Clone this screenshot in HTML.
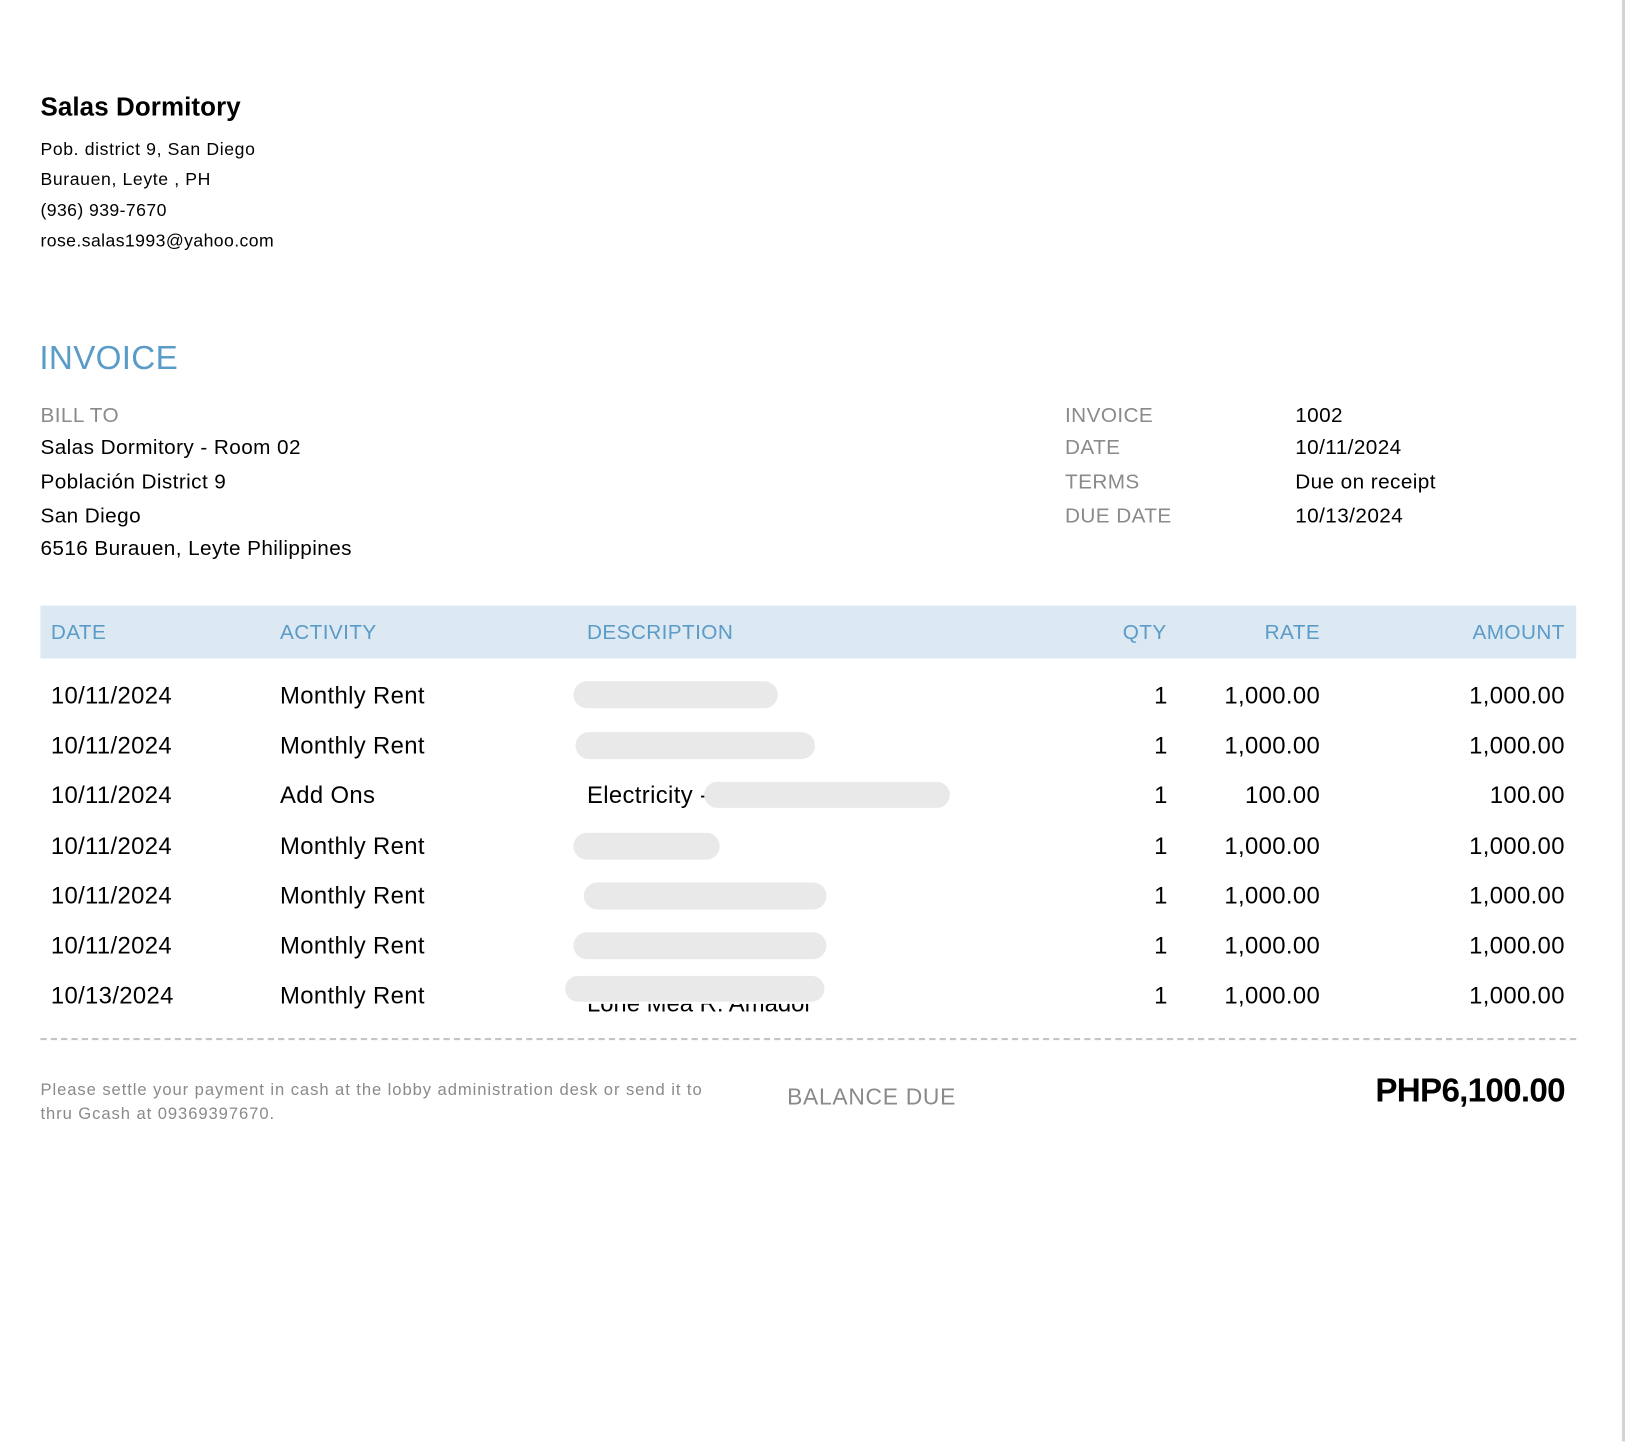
<!DOCTYPE html>
<html><head><meta charset="utf-8"><style>
html,body{margin:0;padding:0;background:#fff;width:1626px;height:1442px;overflow:hidden}
#w{position:absolute;left:0;top:0;width:1568px;height:1390px;transform:scale(1.037);transform-origin:0 0;font-family:"Liberation Sans",Arial,sans-serif;color:#000}
.t{position:absolute;white-space:nowrap;line-height:1;transform:translateY(-50%)}
.r{text-align:right}
.g{color:#8a8a8a}
.b{color:#5a9bc8}
.blob{position:absolute;background:#e9e9e9;border-radius:14px}
.m{font-size:20px;letter-spacing:0.4px}
.rw{letter-spacing:0.35px}
</style></head><body><div id="w">
<div style="position:absolute;right:1px;top:0;width:3px;height:1390px;background:#d4d4d4"></div>
<div class="t" style="left:39px;top:104px;font-size:25px;font-weight:bold;letter-spacing:0.1px">Salas Dormitory</div>
<div class="t" style="left:39px;top:144px;font-size:17px;letter-spacing:0.6px">Pob. district 9, San Diego</div>
<div class="t" style="left:39px;top:173px;font-size:17px;letter-spacing:0.6px">Burauen, Leyte , PH</div>
<div class="t" style="left:39px;top:203px;font-size:17px;letter-spacing:0.4px">(936) 939-7670</div>
<div class="t" style="left:39px;top:232px;font-size:17px;letter-spacing:0.4px">rose.salas1993@yahoo.com</div>
<div class="t b" style="left:38px;top:345px;font-size:32px;letter-spacing:0.3px">INVOICE</div>
<div class="t g m" style="left:39px;top:401px">BILL TO</div>
<div class="t m" style="left:39px;top:432px">Salas Dormitory - Room 02</div>
<div class="t m" style="left:39px;top:465px">Población District 9</div>
<div class="t m" style="left:39px;top:498px">San Diego</div>
<div class="t m" style="left:39px;top:529px">6516 Burauen, Leyte Philippines</div>
<div class="t g m" style="left:1027px;top:401px">INVOICE</div>
<div class="t g m" style="left:1027px;top:432px">DATE</div>
<div class="t g m" style="left:1027px;top:465px">TERMS</div>
<div class="t g m" style="left:1027px;top:498px">DUE DATE</div>
<div class="t m" style="left:1249px;top:401px">1002</div>
<div class="t m" style="left:1249px;top:432px">10/11/2024</div>
<div class="t m" style="left:1249px;top:465px">Due on receipt</div>
<div class="t m" style="left:1249px;top:498px">10/13/2024</div>
<div style="position:absolute;left:39px;top:584px;width:1481px;height:51px;background:#dce8f2"></div>
<div class="t b m" style="left:49px;top:610px">DATE</div>
<div class="t b m" style="left:270px;top:610px">ACTIVITY</div>
<div class="t b m" style="left:566px;top:610px">DESCRIPTION</div>
<div class="t b r m" style="right:443px;top:610px">QTY</div>
<div class="t b r m" style="right:295px;top:610px">RATE</div>
<div class="t b r m" style="right:59px;top:610px">AMOUNT</div>

<div class="rw" style="position:absolute;left:0;top:0;font-size:23px">
<div class="t" style="left:49px;top:671px">10/11/2024</div><div class="t" style="left:270px;top:671px">Monthly Rent</div><div class="t" style="left:1113px;top:671px">1</div>
<div class="t" style="left:49px;top:719px">10/11/2024</div><div class="t" style="left:270px;top:719px">Monthly Rent</div><div class="t" style="left:1113px;top:719px">1</div>
<div class="t" style="left:49px;top:767px">10/11/2024</div><div class="t" style="left:270px;top:767px">Add Ons</div><div class="t" style="left:1113px;top:767px">1</div><div class="t" style="left:566px;top:767px">Electricity -</div>
<div class="t" style="left:49px;top:816px">10/11/2024</div><div class="t" style="left:270px;top:816px">Monthly Rent</div><div class="t" style="left:1113px;top:816px">1</div>
<div class="t" style="left:49px;top:864px">10/11/2024</div><div class="t" style="left:270px;top:864px">Monthly Rent</div><div class="t" style="left:1113px;top:864px">1</div>
<div class="t" style="left:49px;top:912px">10/11/2024</div><div class="t" style="left:270px;top:912px">Monthly Rent</div><div class="t" style="left:1113px;top:912px">1</div>
<div class="t" style="left:49px;top:960px">10/13/2024</div><div class="t" style="left:270px;top:960px">Monthly Rent</div><div class="t" style="left:1113px;top:960px">1</div>
</div>
<div class="rw" style="position:absolute;left:1073px;width:200px;top:0;font-size:23px;text-align:right">
<div class="t" style="right:0;top:671px">1,000.00</div><div class="t" style="right:0;top:719px">1,000.00</div><div class="t" style="right:0;top:767px">100.00</div><div class="t" style="right:0;top:816px">1,000.00</div><div class="t" style="right:0;top:864px">1,000.00</div><div class="t" style="right:0;top:912px">1,000.00</div><div class="t" style="right:0;top:960px">1,000.00</div>
</div>
<div class="rw" style="position:absolute;left:1309px;width:200px;top:0;font-size:23px;text-align:right">
<div class="t" style="right:0;top:671px">1,000.00</div><div class="t" style="right:0;top:719px">1,000.00</div><div class="t" style="right:0;top:767px">100.00</div><div class="t" style="right:0;top:816px">1,000.00</div><div class="t" style="right:0;top:864px">1,000.00</div><div class="t" style="right:0;top:912px">1,000.00</div><div class="t" style="right:0;top:960px">1,000.00</div>
</div>
<div class="blob" style="left:553px;top:657px;width:197px;height:26px"></div>
<div class="blob" style="left:555px;top:706px;width:231px;height:26px"></div>
<div class="blob" style="left:679px;top:754px;width:237px;height:25px"></div>
<div class="blob" style="left:553px;top:803px;width:141px;height:26px"></div>
<div class="blob" style="left:563px;top:851px;width:234px;height:26px"></div>
<div class="blob" style="left:553px;top:899px;width:244px;height:26px"></div>
<div class="blob" style="left:545px;top:941px;width:250px;height:25px"></div>
<div class="t" style="left:566px;top:968px;font-size:23px;clip-path:inset(50% 0 0 0)">Lorie Mea R. Amador</div>

<div style="position:absolute;left:39px;top:1001px;width:1481px;border-top:2px dashed #c4c4c8"></div>
<div style="position:absolute;left:39px;top:1040px;width:655px;font-size:16px;line-height:23px;color:#8a8a8a;letter-spacing:0.9px">Please settle your payment in cash at the lobby administration desk or send it to thru Gcash at 09369397670.</div>
<div class="t g" style="left:759px;top:1058px;font-size:22px;letter-spacing:0.7px">BALANCE DUE</div>
<div class="t r" style="right:59px;top:1051px;font-size:32px;font-weight:bold;letter-spacing:-0.7px">PHP6,100.00</div>
</div></body></html>
